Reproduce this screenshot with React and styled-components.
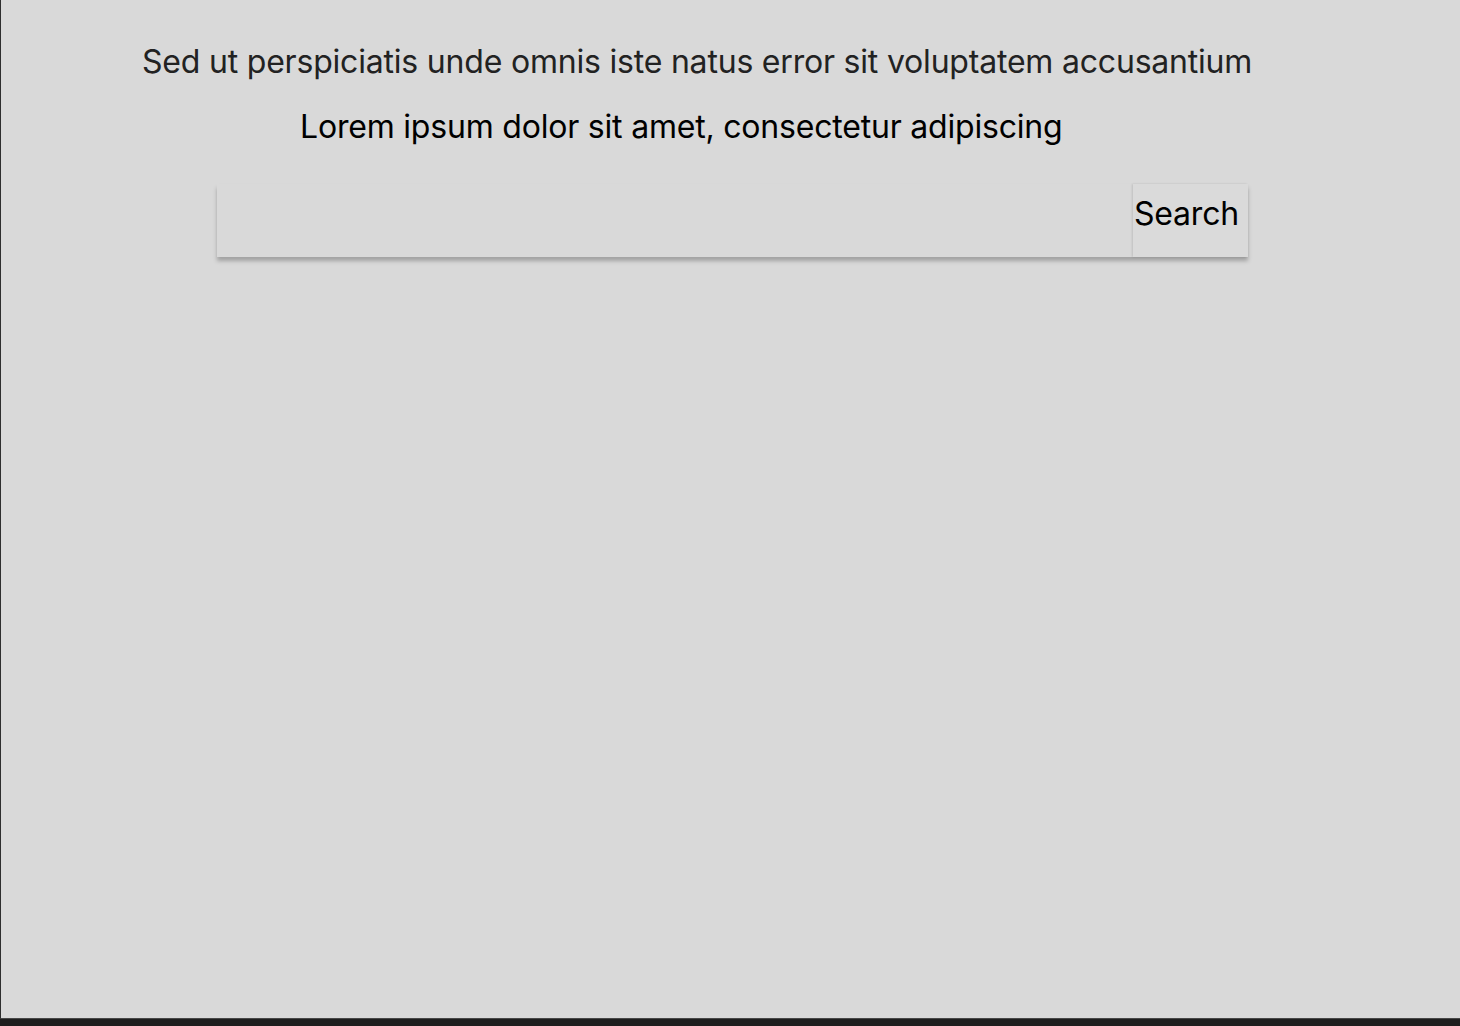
import React from "react";
import styled, { createGlobalStyle } from "styled-components";

const Global = createGlobalStyle`
  html, body { margin: 0; padding: 0; background: #1e1e1e; }
  body { font-family: Inter, "Noto Sans", sans-serif; }
`;

const Frame = styled.div`
  box-sizing: border-box;
  width: 1460px;
  height: 1019px;
  background: #d9d9d9;
  border-left: 1px solid #2e2e2e;
  border-bottom: 1px solid #474747;
  display: flex;
  flex-direction: column;
  align-items: flex-start;
  padding-top: 42px;
`;

const Heading = styled.p`
  margin: ${(p) => p.$top}px 0 0 ${(p) => p.$indent}px;
  font-family: Inter, "Noto Sans", sans-serif;
  font-size: 32px;
  letter-spacing: -0.2px;
  line-height: 39px;
  color: ${(p) => p.$color};
  white-space: nowrap;
`;

const SearchBar = styled.form`
  margin: 38px 0 0 216px;
  width: 1031px;
  height: 73px;
  display: flex;
  background: #d9d9d9;
  box-shadow: 0 4px 4px rgba(0, 0, 0, 0.25);
`;

const Input = styled.input`
  flex: 1;
  border: none;
  outline: none;
  background: transparent;
  font-family: Inter, sans-serif;
  font-size: 24px;
  padding: 0 16px;
`;

const Button = styled.button`
  width: 115px;
  border: none;
  background: #dadada;
  box-shadow: -1px 0 2px rgba(0, 0, 0, 0.12);
  padding: 10px 0 0 1px;
  display: flex;
  align-items: flex-start;
  font-family: Inter, sans-serif;
  font-size: 32px;
  letter-spacing: -0.2px;
  line-height: 39px;
  color: #000;
  cursor: pointer;
`;

export default function App() {
  return (
    <>
      <Global />
      <Frame>
        <Heading $indent={141} $top={0} $color="#222222">
          Sed ut perspiciatis unde omnis iste natus error sit voluptatem accusantium
        </Heading>
        <Heading $indent={299} $top={26} $color="#000000">
          Lorem ipsum dolor sit amet, consectetur adipiscing
        </Heading>
        <SearchBar onSubmit={(e) => e.preventDefault()}>
          <Input type="text" aria-label="Search" />
          <Button type="submit">Search</Button>
        </SearchBar>
      </Frame>
    </>
  );
}
